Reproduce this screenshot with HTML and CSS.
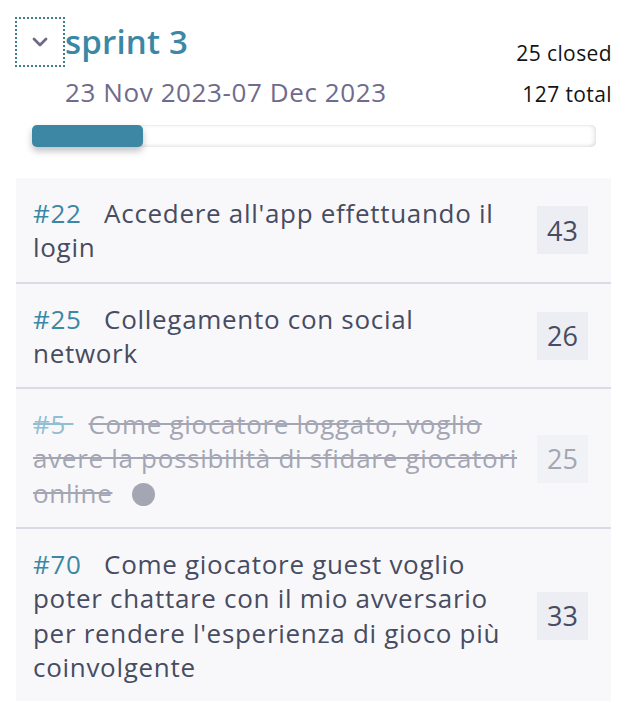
FILE: index.html
```html
<!DOCTYPE html>
<html lang="it">
<head>
<meta charset="utf-8">
<title>sprint 3</title>
<link rel="stylesheet" href="styles.css">
</head>
<body>
<section class="sprint">
  <header class="sprint-header">
    <button class="toggle" aria-label="Comprimi">
      <svg width="16" height="10" viewBox="0 0 16 10"><path d="M2 2 L8 8 L14 2" fill="none" stroke="#6d6a88" stroke-width="2.8" stroke-linecap="round" stroke-linejoin="round"/></svg>
    </button>
    <div class="info">
      <h2 class="title">sprint 3</h2>
      <div class="date">23 Nov 2023-07 Dec 2023</div>
    </div>
    <div class="stats">
      <div>25 closed</div>
      <div>127 total</div>
    </div>
  </header>
  <div class="progress"><div class="progress-fill" style="width:19.7%"></div></div>
  <ul class="stories">
    <li class="story">
      <div class="story-text"><span class="id">#22&nbsp;</span><span class="desc">Accedere all'app effettuando il login</span></div>
      <span class="points">43</span>
    </li>
    <li class="story">
      <div class="story-text"><span class="id">#25&nbsp;</span><span class="desc">Collegamento con social network</span></div>
      <span class="points">26</span>
    </li>
    <li class="story closed">
      <div class="story-text"><span class="id">#5&nbsp;</span><span class="desc">Come giocatore loggato, voglio avere la possibilità di sfidare giocatori online</span><span class="dot"></span></div>
      <span class="points">25</span>
    </li>
    <li class="story">
      <div class="story-text"><span class="id">#70&nbsp;</span><span class="desc">Come giocatore guest voglio poter chattare con il mio avversario per rendere l'esperienza di gioco più coinvolgente</span></div>
      <span class="points">33</span>
    </li>
  </ul>
</section>
</body>
</html>
```
FILE: styles.css
```css
* { box-sizing: border-box; }
html, body { margin: 0; padding: 0; background: #fff; }
body { font-family: "Open Sans", "Noto Sans", sans-serif; color: #4b4f63; }

.sprint-header {
  display: flex;
  align-items: flex-start;
  padding: 17px 16px 0 15px;
}
.toggle {
  width: 50px;
  height: 50px;
  flex: none;
  border: 2px dotted #3f7f8c;
  background: transparent;
  padding: 0;
  display: flex;
  align-items: center;
  justify-content: center;
}
.info { flex: 1; }
.title {
  margin: 0;
  font-size: 33px;
  font-weight: 600;
  line-height: 50px;
  color: #3a88a5;
  letter-spacing: 0.2px;
}
.date {
  margin-top: 8px;
  font-size: 26px;
  line-height: 34px;
  color: #6f6b8c;
  letter-spacing: 0.6px;
}
.stats {
  padding-top: 21px;
  text-align: right;
  font-size: 21px;
  line-height: 30px;
  color: #141414;
  display: flex;
  flex-direction: column;
  gap: 11px;
  letter-spacing: 0.4px;
}

.progress {
  margin: 16px 32px 0 32px;
  height: 22px;
  border-radius: 5px;
  background: #fff;
  box-shadow: inset 0 -2px 3px rgba(0,0,0,0.06), inset -3px 0 4px rgba(0,0,0,0.07), inset 0 1px 2px rgba(0,0,0,0.05);
}
.progress-fill {
  height: 100%;
  border-radius: 5px;
  background: #3d87a5;
  box-shadow: 0 4px 7px rgba(0,0,0,0.25);
}

.stories {
  list-style: none;
  margin: 31px 17px 0 16px;
  padding: 0;
  background: #f8f8fb;
}
.story {
  display: flex;
  align-items: center;
  gap: 17px;
  padding: 18px 23px 17px 17px;
}
.story + .story { border-top: 2px solid #d9dce6; }
.story-text {
  flex: 1;
  font-size: 26px;
  line-height: 34.3px;
  color: #474c61;
  letter-spacing: 0.7px;
}
.id {
  display: inline-block;
  color: #3a88a5;
  margin-right: 15px;
}
.points {
  flex: none;
  width: 51px;
  height: 48px;
  display: flex;
  align-items: center;
  justify-content: center;
  background: #eceef3;
  font-size: 27px;
  color: #474c61;
}
.closed .story-text {
  color: #a4a6b3;
}
.closed .id,
.closed .desc {
  text-decoration: line-through;
}
.closed .id { color: #8fbfd0; }
.closed .points { color: #a4a6b3; background: #f1f2f6; }
.dot {
  display: inline-block;
  width: 23px;
  height: 23px;
  border-radius: 50%;
  background: #a4a6b3;
  margin-left: 20px;
  vertical-align: -3px;
}
```
